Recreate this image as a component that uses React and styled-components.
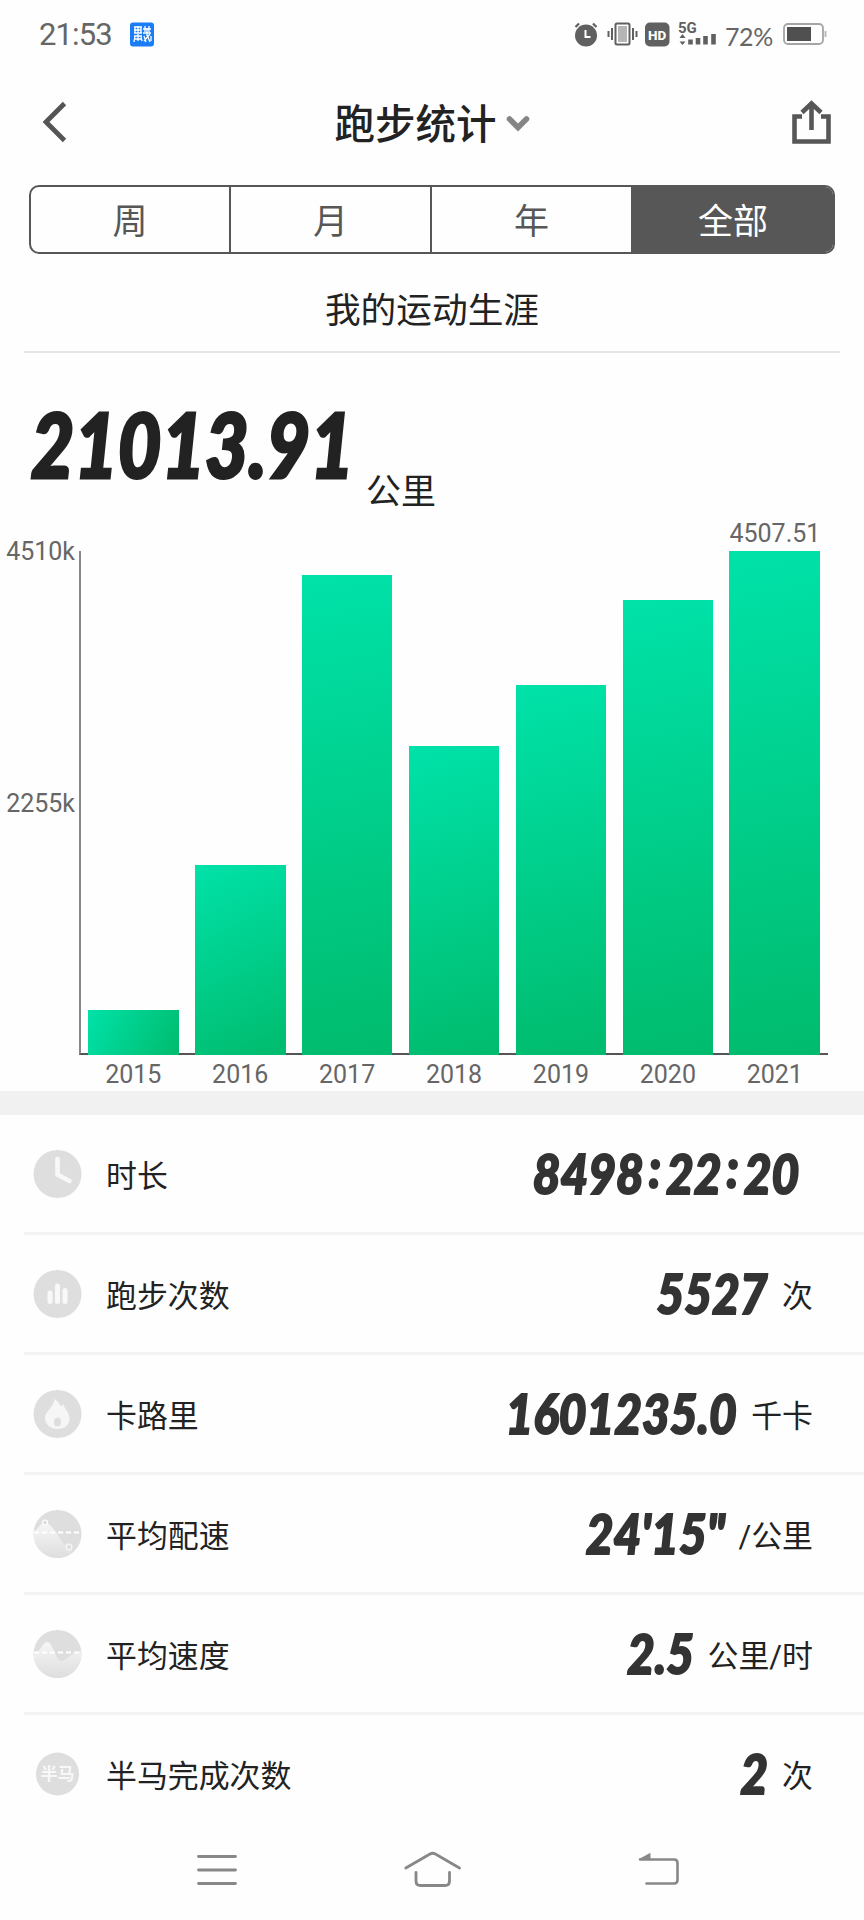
import React, { useState } from 'react'
import styled, { createGlobalStyle } from 'styled-components';

const GlobalStyle = createGlobalStyle`
  * {
    box-sizing: border-box;
  }

  body {
    margin: 0;
    background: #fefefe;
    color: #222;
    font-family: Roboto, "Noto Sans CJK SC", sans-serif;
  }

  svg {
    display: block;
    flex: none;
    overflow: visible;
  }
`;

const Page = styled.div`
  width: 864px;
  height: 1920px;
  overflow: hidden;
  display: flex;
  flex-direction: column;
`;

/* status bar */

const StatusBar = styled.div`
  height: 68px;
  padding: 0 37px 0 39px;
  display: flex;
  align-items: center;
  color: #666;
`;

const Clock = styled.span`
  width: 91px;
  padding-top: 1px;
  font-size: 31px;
  line-height: 36px;
  letter-spacing: -0.9px;
`;

const StatusRight = styled.div`
  margin-left: auto;
  display: flex;
  align-items: center;
`;

const Gap = styled.span`
  width: ${({ w }) => w}px;
`;

const Percent = styled.span`
  margin: 4px 8px 0 8px;
  width: 50px;
  font-family: Lato, "Noto Sans CJK SC", sans-serif;
  font-size: 25px;
  line-height: 28px;
  letter-spacing: -0.4px;
`;

/* header */

const Header = styled.header`
  height: 112px;
  padding: 0 33px 0 42px;
  display: grid;
  grid-template-columns: 60px 1fr 60px;
  align-items: center;
`;

const Title = styled.h1`
  margin: 0;
  padding: 2px 9px 0 0;
  display: flex;
  align-items: center;
  justify-content: center;
  gap: 9px;
  font-size: 40.5px;
  font-weight: 500;
  line-height: 60px;
`;

const ShareButton = styled.div`
  justify-self: end;
  margin-bottom: 5px;
`;

const BackButton = styled.div`
  margin-bottom: 5px;
`;

const Tabs = styled.div`
  margin: 5px 29px 0;
  height: 69px;
  display: grid;
  grid-template-columns: 198px 201px 201px 1fr;
  border: 2px solid #575757;
  border-radius: 10px;
  overflow: hidden;
`;

const Tab = styled.div`
  display: flex;
  align-items: center;
  justify-content: center;
  padding-top: 6px;
  font-size: 35px;
  line-height: 50px;
  cursor: pointer;
  color: ${({ active }) => (active ? '#fff' : '#575757')};
  background: ${({ active }) => (active ? '#575757' : 'transparent')};
  border-left: ${({ first }) => (first ? '0' : '2px solid #575757')};
`;

const Career = styled.div`
  margin: 0 24px;
  height: 99px;
  padding-top: 9px;
  display: flex;
  align-items: center;
  justify-content: center;
  font-size: 35.7px;
  border-bottom: 2px solid #e6e6e6;
`;

/* big total */

const Total = styled.div`
  height: 198px;
  padding: 33px 29px 0;
  display: flex;
  align-items: flex-start;
`;

const Digits = styled.span`
  font-family: Lato, sans-serif;
  font-style: italic;
  font-weight: 900;
  white-space: nowrap;
`;

const TotalNumber = styled(Digits)`
  width: 337px;
  padding-left: 2px;
  font-size: 90px;
  line-height: 114px;
  -webkit-text-stroke: 3px #222;
  transform: scaleX(0.835);
  transform-origin: 0 50%;
`;

const TotalUnit = styled.span`
  padding-top: 82px;
  font-size: 35px;
  line-height: 50px;
`;

/* chart */

const Chart = styled.div`
  height: 504px;
  display: flex;
`;

const YAxis = styled.div`
  width: 79px;
  height: 278px;
  margin-top: -12px;
  padding-right: 4px;
  display: flex;
  flex-direction: column;
  justify-content: space-between;
  align-items: flex-end;
  font-size: 25px;
  line-height: 26px;
  color: #666;
`;

const Plot = styled.div`
  width: 749px;
  padding: 0 8px 0 7px;
  display: flex;
  align-items: flex-end;
  gap: 16.3px;
  border-left: 2px solid #888;
  border-bottom: 2px solid #555;
`;

const Bar = styled.div`
  position: relative;
  flex: 1;
  margin-bottom: -2px;
`;

const BarValue = styled.span`
  position: absolute;
  left: 0;
  right: 0;
  bottom: 100%;
  margin-bottom: 4px;
  text-align: center;
  font-size: 25px;
  line-height: 26px;
  color: #666;
`;

const Years = styled.div`
  height: 36px;
  padding: 0 44px 0 88px;
  display: flex;
  gap: 16.3px;
  font-size: 25px;
  line-height: 40px;
  color: #666;
`;

const Year = styled.span`
  flex: 1;
  text-align: center;
`;

const Band = styled.div`
  height: 24px;
  background: #f1f1f1;
`;

/* stats list */

const StatRow = styled.div`
  height: 120px;
  margin-left: 24px;
  padding: 0 51px 0 9px;
  display: flex;
  align-items: center;
  border-bottom: 3px solid ${({ last }) => (last ? 'transparent' : '#f3f3f3')};
`;

const StatLabel = styled.span`
  margin-left: 24px;
  padding-top: 6px;
  font-size: 30.9px;
  line-height: 44px;
`;

const StatValue = styled.div`
  margin-left: auto;
  display: flex;
  align-items: center;
`;

const StatNumber = styled(Digits)`
  margin-top: -1px;
  font-size: 55px;
  line-height: 64px;
  color: #333;
  -webkit-text-stroke: 2px #333;
  transform: scaleX(0.87);
  transform-origin: 100% 50%;
`;

const Colon = styled.span`
  padding: 0 5.5px;
  line-height: 0;
  vertical-align: 6px;
`;

const StatUnit = styled.span`
  margin-left: 14px;
  padding-top: 6px;
  font-size: 30.9px;
  line-height: 44px;
`;

/* system navigation */

const NavBar = styled.nav`
  flex: 1;
  padding: 0 184px 16px 197px;
  display: flex;
  align-items: center;
  justify-content: space-between;
`;

const HomeButton = styled.div`
  margin-right: 9px;
`;

const AppBadge = () => (
  <svg width="25" height="25" viewBox="0 0 25 25">
    <rect width="24" height="24" y="0.5" rx="3" fill="#1a7df5" />
    <g stroke="#fff" strokeWidth="1.3" fill="none">
      <path d="M4 5h8M4 8h7M4 11h8M5 5v6M8 4v7M11 5v6M4 14h8M5 14l-1 6M5 17h6M8 12v7M11 15l1 4" />
      <path d="M13 7h8M15 4v6M19 4v6M13 11h8M17 6v8M14 14l2 6M17 13l3 7M20 12l-6 7M21 14v5" />
    </g>
  </svg>
)

const AlarmIcon = () => (
  <svg width="24" height="25" viewBox="0 0 24 25">
    <circle cx="12" cy="13.5" r="11" fill="#606060" />
    <path d="M1.5 5l3.5-3.5M22.5 5L19 1.5" stroke="#606060" strokeWidth="2.2" />
    <path d="M11.5 8v7h5" fill="none" stroke="#fff" strokeWidth="2" />
  </svg>
)

const VibrateIcon = () => (
  <svg width="31" height="24" viewBox="0 0 31 24">
    <rect x="8.5" y="1.5" width="14" height="21" rx="1.5" fill="#fff" stroke="#606060" strokeWidth="2" />
    <rect x="11" y="4" width="9" height="16" fill="#b5b5b5" />
    <path d="M5 6v12M1.5 9v6M26 6v12M29.5 9v6" stroke="#606060" strokeWidth="2" />
  </svg>
)

const HdIcon = () => (
  <svg width="25" height="25" viewBox="0 0 25 25">
    <rect y="0.5" width="24.5" height="24" rx="5" fill="#606060" />
    <text x="3" y="17.5" fontFamily="Roboto, sans-serif" fontSize="13.5" fontWeight="800" fill="#fff">HD</text>
  </svg>
)

const SignalIcon = () => (
  <svg width="39" height="26" viewBox="0 0 39 26">
    <text x="0" y="12" fontFamily="Roboto, sans-serif" fontSize="15" fontWeight="700" fill="#606060">5G</text>
    <path d="M4.5 13l3 4h-6zM4.5 24l3-3.5h-6z" fill="#606060" />
    <path d="M12.5 18.5v5M20 17v6.500M27.5 15v8.500M35.5 13v10.500" stroke="#606060" strokeWidth="4.6" />
  </svg>
)

const BatteryIcon = () => (
  <svg width="44" height="22" viewBox="0 0 44 22">
    <rect x="1" y="1" width="39" height="20" rx="4" fill="none" stroke="#a5a5a5" strokeWidth="1.8" />
    <rect x="4" y="4" width="24" height="14" fill="#505050" />
    <path d="M42.5 8v6" stroke="#b5b5b5" strokeWidth="1.8" />
  </svg>
)

const BackIcon = () => (
  <svg width="25" height="42" viewBox="0 0 25 42">
    <path d="M22.5 2.5L4 21l18.5 18.5" fill="none" stroke="#555" strokeWidth="4.8" />
  </svg>
)

const ShareIcon = () => (
  <svg width="39" height="44" viewBox="0 0 39 44">
    <g fill="none" stroke="#575757" strokeWidth="4.6">
      <path d="M10 16.5H2.5V41.5H36.5V16.5H29" />
      <path d="M19.5 30V4M10 12.5l9.5-9 9.5 9" />
    </g>
  </svg>
)

const ArrowDown = () => (
  <svg width="24" height="16" viewBox="0 0 24 16">
    <path d="M3.5 2l8.500 8.500 8.500-8.500" fill="none" stroke="#858585" strokeWidth="5.6" strokeLinecap="round" />
  </svg>
)

const Round = ({ children, r = 24 }) => (
  <svg width="49" height="48" viewBox="0 0 49 48">
    <defs>
      <linearGradient id="hill" x1="0" y1="0" x2="0" y2="1">
        <stop offset="0" stopColor="#f6f6f6" />
        <stop offset="1" stopColor="#dedede" />
      </linearGradient>
      <clipPath id="disc"><circle cx="24.5" cy="24" r="24" /></clipPath>
    </defs>
    <circle cx="24.5" cy="24" r={r} fill="#dedede" />
    {children}
  </svg>
)

const DurationIcon = () => (
  <Round>
    <path d="M24.5 9v15.500l12 6.500" fill="none" stroke="#f8f8f8" strokeWidth="4.6" strokeLinecap="round" strokeLinejoin="round" />
  </Round>
)

const CountIcon = () => (
  <Round>
    <path d="M17 23v8.500M24.5 16v15.500M32 20.5v11" stroke="#f8f8f8" strokeWidth="5" strokeLinecap="round" />
  </Round>
)

const FlameIcon = () => (
  <Round>
    <path d="M21.5 9c3 2 5 4.5 6.5 7.5 1-.5 1.800-1.500 2.500-2.500.5 5 6 8 6 14.500 0 6.500-5 10.500-12 10.500s-12.500-4.500-12.500-11c0-7 8.500-10 9.500-19z" fill="#f6f6f6" />
    <ellipse cx="24.5" cy="32" rx="3.5" ry="4.5" fill="#dedede" />
  </Round>
)

const PaceIcon = () => (
  <Round>
    <g clipPath="url(#disc)">
      <path d="M0 22c5-2 7-9 12-9s10 7 14 14 8 11 12 11l4 10H0z" fill="url(#hill)" />
      <path d="M1 22.5h48" stroke="#fff" strokeWidth="1.8" strokeDasharray="5 3" />
      <circle cx="12" cy="12.5" r="2.5" fill="#dedede" stroke="#fff" strokeWidth="1.2" />
      <circle cx="36" cy="37" r="2.8" fill="#dedede" stroke="#f8f8f8" strokeWidth="1.2" />
    </g>
  </Round>
)

const SpeedIcon = () => (
  <Round>
    <g clipPath="url(#disc)">
      <path d="M0 24c7 0 9-12 14.500-12s8 19 14 19 9-9 20-10v27H0z" fill="url(#hill)" />
      <path d="M1 22.5h48" stroke="#fff" strokeWidth="1.8" strokeDasharray="5 3" />
    </g>
  </Round>
)

const HalfIcon = () => (
  <Round r={21.5}>
    <text x="24.5" y="29.5" textAnchor="middle" fontFamily="Noto Sans CJK SC, sans-serif" fontSize="17" fontWeight="700" fill="#f8f8f8">半马</text>
  </Round>
)

const MenuIcon = () => (
  <svg width="40" height="38" viewBox="0 0 40 38">
    <path d="M1.5 5.5h37M1.5 19h37M1.5 32.5h37" stroke="#888" strokeWidth="2.8" strokeLinecap="round" />
  </svg>
)

const HomeIcon = () => (
  <svg width="58" height="38" viewBox="0 0 58 38">
    <g fill="none" stroke="#888" strokeWidth="2.8" strokeLinecap="round">
      <path d="M1.8 17L26 3q2.700-1.500 5.400 0L55.5 17" />
      <path d="M12 21.5V30q0 4.500 4.500 4.500h24.500q4.500 0 4.500-4.500V21.5" />
    </g>
  </svg>
)

const ReturnIcon = () => (
  <svg width="42" height="38" viewBox="0 0 42 38">
    <path d="M2 8.5H36q3.500 0 3.500 3.500V29q0 3.500-3.500 3.500H8.5" fill="none" stroke="#888" strokeWidth="2.6" strokeLinecap="round" />
    <path d="M1 8L11.5 2.200q1-.4 1 .6V8z" fill="#888" />
  </svg>
)

const tabs = ['周', '月', '年', '全部']

const BAR_WIDTH = 90.7

const bars = [
  { year: 2015, height: 45 },
  { year: 2016, height: 190 },
  { year: 2017, height: 480 },
  { year: 2018, height: 309 },
  { year: 2019, height: 370 },
  { year: 2020, height: 455 },
  { year: 2021, height: 504, value: '4507.51' },
]

const stats = [
  { icon: DurationIcon, label: '时长', value: '8498:22:20', unit: '' },
  { icon: CountIcon, label: '跑步次数', value: '5527', unit: '次' },
  { icon: FlameIcon, label: '卡路里', value: '1601235.0', unit: '千卡' },
  { icon: PaceIcon, label: '平均配速', value: '24\'15"', unit: '/公里' },
  { icon: SpeedIcon, label: '平均速度', value: '2.5', unit: '公里/时' },
  { icon: HalfIcon, label: '半马完成次数', value: '2', unit: '次' },
]

// gradient runs from the top left corner to the bottom right one
const barStyle = (height) => {
  const angle = 180 - Math.atan(BAR_WIDTH / height) * 180 / Math.PI
  return {
    height,
    background: `linear-gradient(${angle}deg, #00e2a9, #00bb6d)`,
  }
}

// the colons of a duration sit higher than the baseline
const renderValue = (value) => value.split(':').map((part, index) => (
  <React.Fragment key={index}>
    {index > 0 && <Colon>:</Colon>}
    {part}
  </React.Fragment>
))

const App = () => {

  const [tab, setTab] = useState(3);

  return (
    <Page>
      <GlobalStyle />
      <StatusBar>
        <Clock>21:53</Clock>
        <AppBadge />
        <StatusRight>
          <AlarmIcon />
          <Gap w={9} />
          <VibrateIcon />
          <Gap w={7.5} />
          <HdIcon />
          <Gap w={8} />
          <SignalIcon />
          <Percent>72%</Percent>
          <BatteryIcon />
        </StatusRight>
      </StatusBar>

      <Header>
        <BackButton><BackIcon /></BackButton>
        <Title>跑步统计<ArrowDown /></Title>
        <ShareButton><ShareIcon /></ShareButton>
      </Header>

      <Tabs>
        {tabs.map((name, index) => (
          <Tab key={name} first={index === 0} active={index === tab} onClick={() => setTab(index)}>{name}</Tab>
        ))}
      </Tabs>

      <Career>我的运动生涯</Career>

      <Total>
        <TotalNumber>21013.91</TotalNumber>
        <TotalUnit>公里</TotalUnit>
      </Total>

      <Chart>
        <YAxis>
          <span>4510k</span>
          <span>2255k</span>
        </YAxis>
        <Plot>
          {bars.map((bar) => (
            <Bar key={bar.year} style={barStyle(bar.height)}>
              {bar.value && <BarValue>{bar.value}</BarValue>}
            </Bar>
          ))}
        </Plot>
      </Chart>
      <Years>
        {bars.map((bar) => <Year key={bar.year}>{bar.year}</Year>)}
      </Years>

      <Band />

      {stats.map(({ icon: Icon, label, value, unit }, index) => (
        <StatRow key={label} last={index === stats.length - 1}>
          <Icon />
          <StatLabel>{label}</StatLabel>
          <StatValue>
            <StatNumber>{renderValue(value)}</StatNumber>
            <StatUnit>{unit}</StatUnit>
          </StatValue>
        </StatRow>
      ))}

      <NavBar>
        <MenuIcon />
        <HomeButton><HomeIcon /></HomeButton>
        <ReturnIcon />
      </NavBar>
    </Page>
  )
}

export default App;
